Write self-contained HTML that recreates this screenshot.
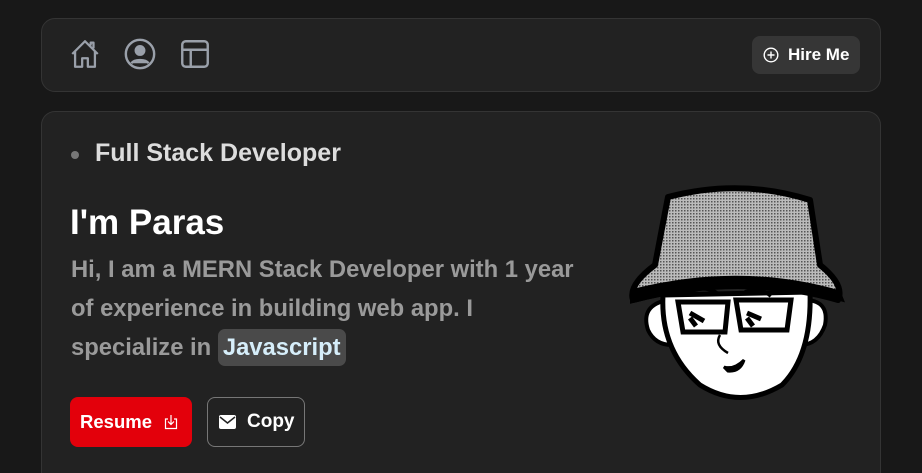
<!DOCTYPE html>
<html><head><meta charset="utf-8"><style>
*{margin:0;padding:0;box-sizing:border-box}
html,body{width:922px;height:473px;overflow:hidden}
body{background:#181818;font-family:"Liberation Sans",sans-serif;position:relative}
.card{position:absolute;left:41px;width:840px;background:#222;border:1px solid #343434;border-radius:14px}
.nav{top:18px;height:74px}
.main{top:111px;height:362px;border-bottom:none;border-radius:14px 14px 0 0}
.ico{position:absolute;top:37px}
.hire{position:absolute;left:752px;top:36px;width:108px;height:38px;background:#363636;border-radius:8px;color:#fff;font-weight:bold;font-size:17px;display:flex;align-items:center;padding-left:11px;gap:9px}
.t{position:absolute;white-space:nowrap}
</style></head><body>
<div class="card nav"></div>
<svg class="ico" style="left:68px" width="34" height="34" viewBox="0 0 24 24" fill="none" stroke="#9aa0aa" stroke-width="1.6" stroke-linejoin="round"><path d="M3 12L12 3l9 9M5 10v11h5v-6h4v6h5V10M16 6V4h2v4"/></svg>
<svg class="ico" style="left:123px" width="34" height="34" viewBox="0 0 24 24" fill="none" stroke="#9aa0aa" stroke-width="1.7"><circle cx="12" cy="12" r="10"/><circle cx="12" cy="9.5" r="3" fill="#9aa0aa"/><path d="M6 18.5c2-3 10-3 12 0" fill="#9aa0aa"/></svg>
<svg class="ico" style="left:178px" width="34" height="34" viewBox="0 0 24 24" fill="none" stroke="#9aa0aa" stroke-width="1.7"><rect x="3" y="3" width="18" height="18" rx="2.5"/><path d="M3 9h18M9 9v12"/></svg>
<div class="hire"><svg width="16" height="16" viewBox="0 0 16 16" fill="none" stroke="#fff" stroke-width="1.4"><circle cx="8" cy="8" r="6.8"/><path d="M8 4.5v7M4.5 8h7"/></svg>Hire Me</div>
<div class="card main"></div>
<div style="position:absolute;left:71px;top:151px;width:8px;height:8px;border-radius:50%;background:#777"></div>
<div class="t" style="left:95px;top:139px;font-size:25px;font-weight:bold;color:#ddd">Full Stack Developer</div>
<div class="t" style="left:70px;top:203px;font-size:35px;font-weight:bold;color:#fff">I'm Paras</div>
<div class="t" style="left:71px;top:250px;font-size:23.8px;line-height:39px;color:#9a9a9a;font-weight:bold;white-space:normal;width:560px">Hi, I am a MERN Stack Developer with 1 year<br>of experience in building web app. I<br>specialize in <span style="background:#4a4a4a;color:#d6eefa;border-radius:7px;padding:5px 5px 5px 5px">Javascript</span></div>
<div style="position:absolute;left:70px;top:397px;width:122px;height:50px;background:#e3000b;border-radius:8px;color:#fff;font-weight:bold;font-size:18.5px;display:flex;align-items:center;padding-left:10px;gap:12px">Resume<svg width="14" height="16" viewBox="0 0 14 16" fill="none" stroke="#fff" stroke-width="1.2"><path d="M4 5H1.5v9.5h11V5H10M7 1v9M4 7.5l3 3 3-3"/></svg></div>
<div style="position:absolute;left:207px;top:397px;width:98px;height:50px;border:1px solid #777;border-radius:8px;color:#fff;font-weight:bold;font-size:19px;display:flex;align-items:center;padding-left:11px;gap:11px"><svg width="17" height="14" viewBox="0 0 17 14"><rect x="0" y="0" width="17" height="14" rx="2" fill="#fff"/><path d="M1 2l7.5 6L16 2" fill="none" stroke="#222" stroke-width="1.5"/></svg>Copy</div>
<svg style="position:absolute;left:620px;top:178px" width="240" height="230" viewBox="620 178 240 230">
<defs><pattern id="p" width="3" height="3" patternUnits="userSpaceOnUse"><rect width="3" height="3" fill="#bbb"/><rect width="1.5" height="1.5" fill="#555"/></pattern></defs>
<path d="M668 300 Q640 305 648 330 Q655 345 672 345Z" fill="#fff" stroke="#000" stroke-width="4"/>
<path d="M800 300 Q830 298 825 325 Q818 345 800 345Z" fill="#fff" stroke="#000" stroke-width="4"/>
<path d="M663 295 Q660 350 700 385 Q740 410 782 385 Q812 355 810 292Z" fill="#fff" stroke="#000" stroke-width="5"/>
<path d="M668 197 Q740 178 810 200 L820 265 Q845 285 838 300 Q740 272 633 300 Q628 285 655 265Z" fill="url(#p)" stroke="#000" stroke-width="6" stroke-linejoin="round"/>
<path d="M633 300 Q740 272 840 298 L838 293 Q740 265 633 292Z" fill="#000" stroke="#000" stroke-width="6"/>
<path d="M678 302 h50 l-3 30 h-42Z M736 300 h55 l-4 30 h-46Z" fill="none" stroke="#000" stroke-width="5"/>
<path d="M690 292 q15-8 28 2 M745 292 q15-6 26 4" fill="none" stroke="#000" stroke-width="4"/>
<path d="M690 313 l14 8 M690 318 l6 8 M747 313 l14 6 M747 318 l6 8" fill="none" stroke="#000" stroke-width="5"/>
<path d="M720 335 q-6 10 8 18" fill="none" stroke="#000" stroke-width="2.5"/>
<path d="M724 367 q10 3 20 -7 q-4 12 -16 11Z" fill="#000" stroke="#000" stroke-width="3"/>
</svg>
</body></html>
